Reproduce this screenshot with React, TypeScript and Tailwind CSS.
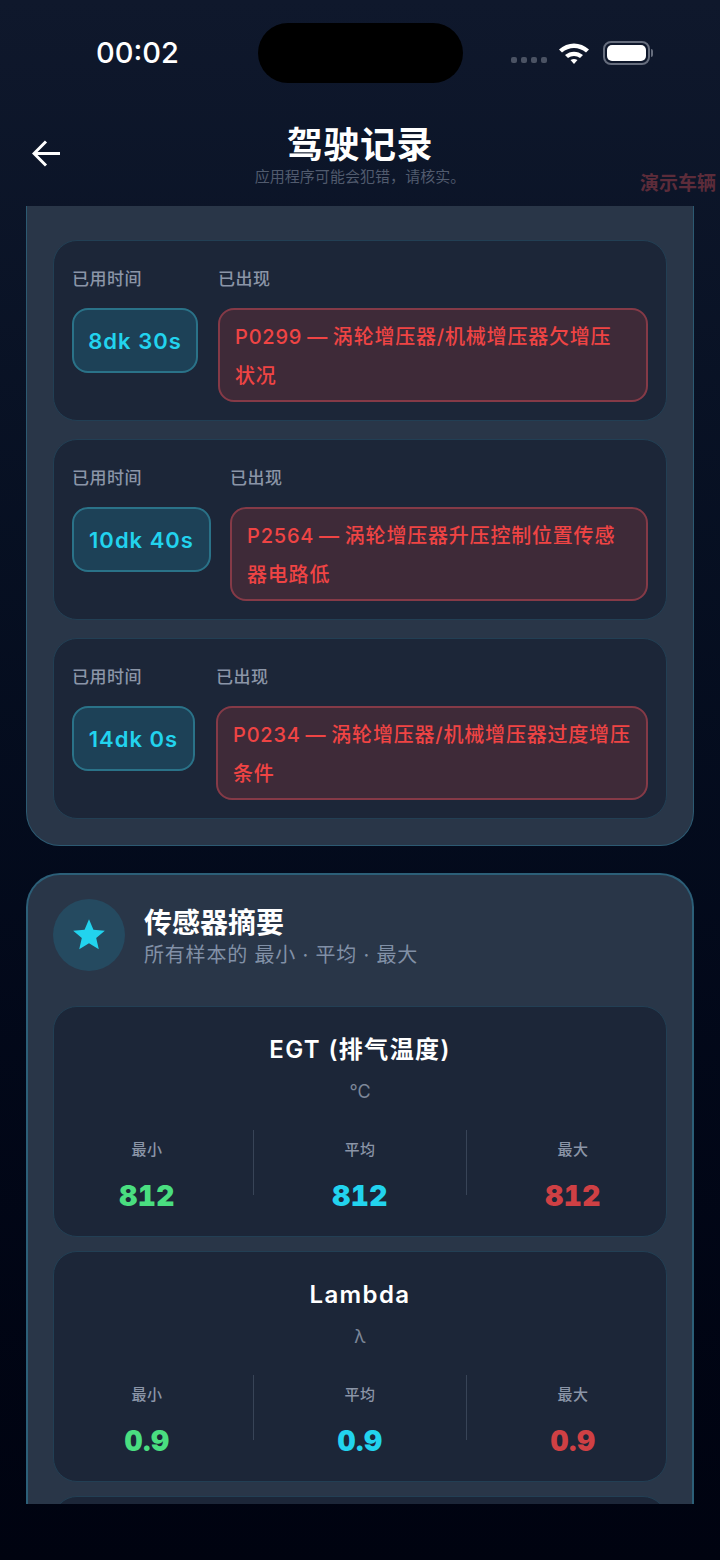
import React from "react";

const font = { fontFamily: 'Inter, "Noto Sans CJK SC", sans-serif' };

function Log({ time, lines, chip, gap }: { time: string; lines: string[]; chip: string; gap: string }) {
  return (
    <div className={`flex h-[181px] ${gap} rounded-[24px] border border-[#223f54] bg-[#1c2638] pt-[27px] pb-[18px] pl-[18px] pr-[18px]`}>
      <div className={`${chip} shrink-0`}>
        <div className="h-[22px] text-[17px] leading-[22px] font-medium tracking-[0.5px] text-[#8b95a7]">已用时间</div>
        <div className="mt-[18px] flex h-[65px] items-center justify-center rounded-[16px] border-2 border-[#2a7288] bg-[#1d4157] pt-[2px] text-[22px] font-semibold tracking-[1px] text-[#22d3ee]">
          {time}
        </div>
      </div>
      <div className="min-w-0 flex-1">
        <div className="h-[22px] text-[17px] leading-[22px] font-medium tracking-[0.5px] text-[#8b95a7]">已出现</div>
        <div className="mt-[18px] rounded-[16px] border-2 border-[#853a47] bg-[#3e2a38] pl-[15px] pr-[10px] pt-[8px] pb-[4px] text-[20px] leading-[39px] font-medium tracking-[0.8px] whitespace-nowrap text-[#ef4444] [word-spacing:-1.25px]">
          <span className="block">{lines[0]}</span>
          <span className="block">{lines[1]}</span>
        </div>
      </div>
    </div>
  );
}

function Stat({ label, value, color }: { label: string; value: string; color: string }) {
  return (
    <div className="w-[212px] shrink-0 pt-[10px] text-center">
      <div className="text-[15px] leading-[20px] font-medium tracking-[0.5px] text-[#8b95a7]">{label}</div>
      <div className={`mt-[19px] text-[28px] leading-[34px] font-black tracking-[0.5px] tabular-nums ${color}`}>{value}</div>
    </div>
  );
}

function Sensor({ title, unit, value }: { title: string; unit: string; value: string }) {
  return (
    <div className="h-[231px] shrink-0 rounded-[24px] border border-[#223f54] bg-[#1c2638] pt-[28px]">
      <div className="text-center text-[24px] leading-[30px] font-semibold tracking-[1.4px] text-white">{title}</div>
      <div className="mt-[16px] text-center text-[18px] leading-[22px] text-[#7c8799]">{unit}</div>
      <div className="mt-[27px] flex items-start justify-center">
        <Stat label="最小" value={value} color="text-[#4ade80]" />
        <div className="h-[65px] w-[1px] shrink-0 bg-[#384457]" />
        <Stat label="平均" value={value} color="text-[#22d3ee]" />
        <div className="h-[65px] w-[1px] shrink-0 bg-[#384457]" />
        <Stat label="最大" value={value} color="text-[#cf4044]" />
      </div>
    </div>
  );
}

export default function App() {
  return (
    <div style={font} className="relative h-[1560px] w-[720px] overflow-hidden bg-gradient-to-b from-[#0f182c] to-[#000310]">
      <div className="flex h-[106px]">
        <div className="w-[258px] pl-[96px] pt-[34px] text-[29px] leading-[38px] font-medium text-white">00:02</div>
        <div className="mt-[23px] h-[60px] w-[205px] rounded-[30px] bg-black" />
        <div className="flex items-start pl-[48px] pt-[41px]">
          <div className="mt-[16px] flex gap-[4px]">
            <span className="h-[6px] w-[6px] rounded-[2px] bg-[#4a5263]" />
            <span className="h-[6px] w-[6px] rounded-[2px] bg-[#4a5263]" />
            <span className="h-[6px] w-[6px] rounded-[2px] bg-[#4a5263]" />
            <span className="h-[6px] w-[6px] rounded-[2px] bg-[#4a5263]" />
          </div>
          <svg className="ml-[11px]" width="32" height="24" viewBox="0 0 32 24">
            <path d="M1 8.5C9.5 0.5 22.5 0.5 31 8.5L28 11.5C21 5.5 11 5.5 4 11.5Z" fill="#fff" />
            <path d="M7 14C12.5 9.5 19.5 9.5 25 14L22 17C18.5 14.2 13.5 14.2 10 17Z" fill="#fff" />
            <path d="M12.5 19C15 17.6 17 17.6 19.5 19L16 23Z" fill="#fff" />
          </svg>
          <div className="ml-[13px] flex items-center">
            <div className="h-[24px] w-[47px] rounded-[8px] border-2 border-[#666d7d] p-[2px]">
              <div className="h-full w-full rounded-[5px] bg-white" />
            </div>
            <div className="ml-[1px] h-[8px] w-[2px] rounded-r-[2px] bg-[#666d7d]" />
          </div>
        </div>
      </div>

      <div className="relative flex h-[100px] flex-col items-center">
        <svg className="absolute left-[32px] top-[34px]" width="29" height="27" viewBox="0 0 29 27" fill="none">
          <path d="M14 1.5L2 13.5L14 25.5M2 13.5H28" stroke="#fff" strokeWidth="3" />
        </svg>
        <div className="mt-[16px] text-[36px] leading-[46px] font-bold tracking-[0.5px] text-white">驾驶记录</div>
        <div className="-mt-[2px] text-[15px] leading-[22px] tracking-[0.05px] text-[#515b6e]">应用程序可能会犯错，请核实。</div>
        <div className="absolute right-[4px] top-[66px] text-[19px] leading-[24px] font-bold text-[#5c2c3a]">演示车辆</div>
      </div>

      <div className="h-[1298px] overflow-hidden px-[26px]">
        <div className="rounded-b-[34px] border border-t-0 border-[#2c5a72] bg-[#293648] px-[26px] pt-[34px] pb-[26px]">
          <div className="flex flex-col gap-[18px]">
            <Log time="8dk 30s" chip="w-[126px]" gap="gap-[20px]" lines={["P0299 — 涡轮增压器/机械增压器欠增压", "状况"]} />
            <Log time="10dk 40s" chip="w-[139px]" gap="gap-[19px]" lines={["P2564 — 涡轮增压器升压控制位置传感", "器电路低"]} />
            <Log time="14dk 0s" chip="w-[123px]" gap="gap-[21px]" lines={["P0234 — 涡轮增压器/机械增压器过度增压", "条件"]} />
          </div>
        </div>

        <div className="mt-[27px] rounded-[34px] border-2 border-b-0 border-[#2c5f78] bg-[#293648] px-[25px] pt-[24px]">
          <div className="flex items-center gap-[19px]">
            <div className="flex h-[72px] w-[72px] items-center justify-center rounded-full bg-[#254a60]">
              <svg width="38" height="38" viewBox="0 0 24 24" fill="#22d3ee">
                <path d="M12 17.27L18.18 21l-1.64-7.03L22 9.24l-7.19-.61L12 2 9.19 8.63 2 9.24l5.46 4.73L5.82 21z" />
              </svg>
            </div>
            <div className="pt-[3px]">
              <div className="text-[28px] leading-[36px] font-bold text-white">传感器摘要</div>
              <div className="mt-[1px] text-[20px] leading-[26px] tracking-[0.8px] text-[#8190a6]">所有样本的 最小 · 平均 · 最大</div>
            </div>
          </div>
          <div className="mt-[35px] flex flex-col gap-[14px]">
            <Sensor title="EGT (排气温度)" unit="°C" value="812" />
            <Sensor title="Lambda" unit="λ" value="0.9" />
            <div className="h-[100px] shrink-0 rounded-[24px] border border-[#223f54] bg-[#1c2638]" />
          </div>
        </div>
      </div>
    </div>
  );
}
